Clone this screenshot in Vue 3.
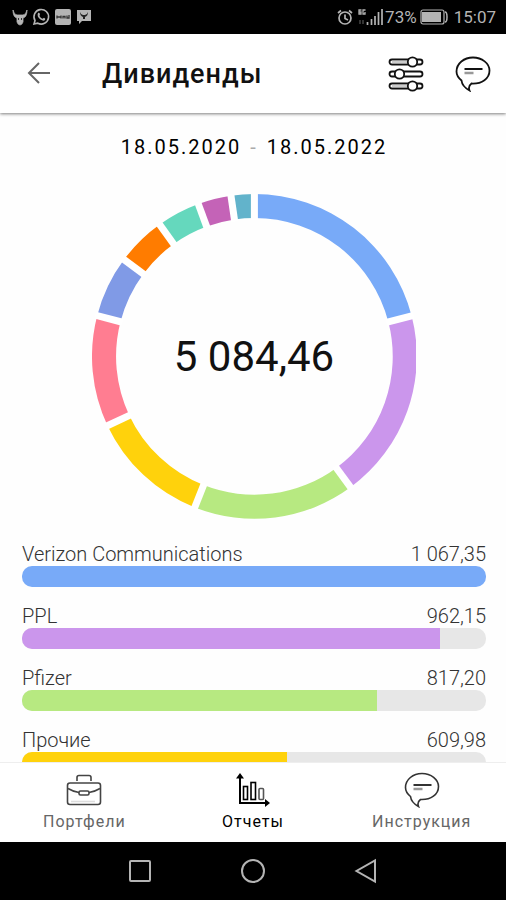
<script setup>
import { ref, computed } from 'vue';

const period = ref({ from: '18.05.2020', to: '18.05.2022' });
const activeTab = ref('reports');

const dividends = ref([
    { name: 'Verizon Communications', value: 1067.35, color: '#78aaf8' },
    { name: 'PPL', value: 962.15, color: '#cb96ec' },
    { name: 'Pfizer', value: 817.2, color: '#b7e981' },
    { name: 'Прочие', value: 609.98, color: '#ffd20c' },
]);

// smaller positions, shown on the chart only
const others = ref([
    { value: 561.5, color: '#ff7d91' },
    { value: 312.1, color: '#809ae6' },
    { value: 250, color: '#ff7c00' },
    { value: 218.9, color: '#65d8bd' },
    { value: 168.1, color: '#c463b7' },
    { value: 117.18, color: '#62b3cb' },
]);

const tabs = [
    { id: 'portfolios', label: 'Портфели' },
    { id: 'reports', label: 'Отчеты' },
    { id: 'help', label: 'Инструкция' },
];

const sum = (list) => list.reduce((acc, item) => acc + item.value, 0);
const total = computed(() => sum(dividends.value) + sum(others.value));
const max = computed(() => Math.max(...dividends.value.map((item) => item.value)));

const formatMoney = (value) => {
    const [whole, cents] = value.toFixed(2).split('.');
    return whole.replace(/\B(?=(\d{3})+$)/g, '\u00a0') + ',' + cents;
};

const point = (angle, radius) => {
    const rad = (angle * Math.PI) / 180;
    return `${162 + radius * Math.sin(rad)} ${162 - radius * Math.cos(rad)}`;
};

const segments = computed(() => {
    let angle = 0;
    return [...dividends.value, ...others.value].map((item) => {
        const start = angle;
        angle += (item.value / total.value) * 360;
        return {
            color: item.color,
            start,
            path: `M${point(start, 162)} A162 162 0 0 1 ${point(angle, 162)} L${point(angle, 138)} A138 138 0 0 0 ${point(start, 138)} Z`,
        };
    });
});
</script>

<template>
    <div class="screen">
        <div class="status">
            <div class="statusIcons">
                <svg width="16" height="18" viewBox="0 0 16 18">
                    <path d="M1 2 Q2 7 5 7 L11 7 Q14 7 15 2 Q15 9 11 10 L11 14 Q10 17 8 17 Q6 17 5 14 L5 10 Q1 9 1 2Z" fill="#b4b4b4" stroke="#b4b4b4" stroke-width="0.800" />
                    <path d="M6.500 10v2M9.500 10v2" stroke="#333" />
                </svg>
                <svg width="18" height="18" viewBox="0 0 18 18">
                    <path d="M2 16 L3 12.500 A7.300 7.300 0 1 1 5.800 15.200 Z" fill="none" stroke="#b4b4b4" stroke-width="1.600" />
                    <path d="M6 5 Q7 4 8 6 L7.500 8 Q8.500 10 10.500 10.700 L12 9.800 Q14 10.500 13 12 Q11.500 13.500 8.500 11.500 Q4.500 8.500 6 5Z" fill="#b4b4b4" />
                </svg>
                <svg width="18" height="18" viewBox="0 0 18 18">
                    <rect x="1" y="1" width="16" height="16" rx="2" fill="#b4b4b4" />
                    <path d="M3 7.500v3M3 9h4M7 7.500v3M9 10.500v-2h2v2M13 7.500v2.500h2v-3" fill="none" stroke="#333" stroke-width="1.300" />
                </svg>
                <svg width="16" height="18" viewBox="0 0 16 18">
                    <path d="M1 2h14v11H6l-3 3v-3H1Z" fill="#b4b4b4" />
                    <path d="M4 4q1 3 3 3h2q2 0 3-3q0 4-3 5v2H7V9Q4 8 4 4Z" fill="#222" />
                </svg>
            </div>
            <div class="statusRight">
                <svg width="16" height="17" viewBox="0 0 16 17">
                    <g fill="none" stroke="#b4b4b4" stroke-width="1.700">
                        <circle cx="8" cy="9" r="6" />
                        <path d="M8 5.500v4l3 1.500M1 4l3-2.500M12 1.500L15 4" />
                    </g>
                </svg>
                <svg class="signal" width="25" height="18" viewBox="0 0 25 18">
                    <path d="M3.500 2H1v4h2V4H1M7.500 2H5v4h2V4" fill="none" stroke="#b4b4b4" stroke-width="1.300" />
                    <path d="M2 12v4M5 12v4" stroke="#333" stroke-width="2" />
                    <path d="M9.500 14v3M13.500 11v6M17 8v9M20.500 4v13M24 1v16" stroke="#b4b4b4" stroke-width="1.700" />
                </svg>
                <span>73%</span>
                <svg class="battery" width="28" height="16" viewBox="0 0 28 16">
                    <rect x="1" y="1" width="23" height="14" rx="2" fill="none" stroke="#b4b4b4" stroke-width="1.200" />
                    <rect x="2" y="3" width="19" height="10" fill="#b4b4b4" />
                    <path d="M25 3q2 0 2 5T25 13" fill="none" stroke="#b4b4b4" stroke-width="1.500" />
                </svg>
                <span>15:07</span>
            </div>
        </div>

        <header class="header">
            <button class="iconButton" aria-label="Назад">
                <svg width="24" height="24" viewBox="0 0 24 24" fill="none" stroke="#666" stroke-width="2">
                    <path d="M23 11H2M12 1L2 11l10 10" />
                </svg>
            </button>
            <h1>Дивиденды</h1>
            <button class="iconButton" aria-label="Фильтр">
                <svg width="36" height="36" viewBox="0 0 36 36" fill="#fff" stroke="#111" stroke-width="1.800">
                    <rect x="1.500" y="3.500" width="33" height="5" rx="2.500" />
                    <rect x="1.500" y="15.500" width="33" height="5" rx="2.500" />
                    <rect x="1.500" y="27.500" width="33" height="5" rx="2.500" />
                    <path d="M4 6h16M4 30h16" stroke="#ccc" stroke-width="2.500" />
                    <circle cx="24.500" cy="6" r="4.700" />
                    <circle cx="11.500" cy="18" r="4.700" />
                    <circle cx="24.500" cy="30" r="4.700" />
                </svg>
            </button>
            <button class="iconButton" aria-label="Комментарии">
                <svg width="36" height="36" viewBox="0 0 36 36" fill="none" stroke="#111" stroke-width="1.800">
                    <path d="M6.500 24.500 C3.500 22 1.500 19 1.500 15.500 C1.500 7.500 9 1.500 18 1.500 C27 1.500 34.500 7.500 34.500 14.500 C34.500 22.500 27 28 16.500 27.500 C14.500 29 13.500 32 14.500 34.500 C10 32 7 29 6.500 24.500Z" />
                    <path d="M9.500 13H27.500" stroke-width="2" />
                    <path d="M9.500 17H18.500" stroke="#999" stroke-width="2.500" />
                </svg>
            </button>
        </header>

        <main class="content">
            <p class="period">{{ period.from }} <span>-</span> {{ period.to }}</p>

            <div class="chart">
                <svg viewBox="0 0 324 324">
                    <path v-for="segment in segments" :key="segment.start" :d="segment.path" :fill="segment.color" />
                    <line v-for="segment in segments" :key="segment.start" x1="162" y1="-2" x2="162" y2="26"
                        :transform="`rotate(${segment.start} 162 162)`" stroke="#fff" stroke-width="7" />
                </svg>
                <strong>{{ formatMoney(total) }}</strong>
            </div>

            <ul class="list">
                <li v-for="item in dividends" :key="item.name">
                    <div class="row">
                        <span>{{ item.name }}</span>
                        <span>{{ formatMoney(item.value) }}</span>
                    </div>
                    <div class="bar">
                        <div class="fill" :style="{ width: (item.value / max) * 100 + '%', background: item.color }"></div>
                    </div>
                </li>
            </ul>
        </main>

        <nav class="tabs">
            <button v-for="tab in tabs" :key="tab.id" :class="{ active: activeTab === tab.id }" @click="activeTab = tab.id">
                <svg v-if="tab.id === 'portfolios'" width="36" height="36" viewBox="0 0 36 36" fill="none" stroke="#444" stroke-width="1.600">
                    <path d="M11 9V5.500Q11 3.500 13 3.500H23Q25 3.500 25 5.500V9" />
                    <rect x="1.500" y="11" width="33" height="21.500" rx="2.500" />
                    <path d="M2 16.500Q8 20 13 20.500M23 20.500Q28 20 34 16.500" />
                    <rect x="13" y="19" width="10" height="4" rx="1.500" />
                    <path d="M5 29.500H29" stroke="#ddd" />
                </svg>
                <svg v-else-if="tab.id === 'reports'" width="36" height="36" viewBox="0 0 36 36" fill="none" stroke="#000" stroke-width="1.600">
                    <path d="M5 4V31H31" stroke-width="2" />
                    <path d="M1 6.500L5 1L9 6.500ZM30 27L35 31L30 35Z" fill="#000" stroke="none" />
                    <rect x="8.500" y="14.500" width="4" height="13" />
                    <rect x="16" y="10.500" width="4.500" height="17" />
                    <rect x="24" y="16.500" width="4.500" height="11" rx="1" stroke="#555" />
                </svg>
                <svg v-else width="36" height="36" viewBox="0 0 36 36" fill="none" stroke="#333" stroke-width="1.600">
                    <path d="M6.500 24.500 C3.500 22 1.500 19 1.500 15.500 C1.500 7.500 9 1.500 18 1.500 C27 1.500 34.500 7.500 34.500 14.500 C34.500 22.500 27 28 16.500 27.500 C14.500 29 13.500 32 14.500 34.500 C10 32 7 29 6.500 24.500Z" />
                    <path d="M9.500 13H27.500" stroke-width="2" />
                    <path d="M9.500 17H18.500" stroke="#999" stroke-width="2.500" />
                </svg>
                <span>{{ tab.label }}</span>
            </button>
        </nav>

        <div class="system">
            <button aria-label="Недавние">
                <svg width="24" height="24" viewBox="0 0 24 24"><rect x="2" y="2" width="20" height="20" rx="1" /></svg>
            </button>
            <button aria-label="Домой">
                <svg width="26" height="26" viewBox="0 0 26 26"><circle cx="13" cy="13" r="11" /></svg>
            </button>
            <button aria-label="Назад">
                <svg width="24" height="26" viewBox="0 0 24 26"><path d="M21 2.500V23.500L2.500 13Z" /></svg>
            </button>
        </div>
    </div>
</template>

<style>
body {
    background: #fff;
}
</style>

<style scoped>
.screen {
    display: flex;
    flex-direction: column;
    height: 100vh;
    font-family: Roboto, "Noto Sans", sans-serif;
    background: #fefefe;
}

button {
    border: none;
    background: none;
    padding: 0;
    font-family: inherit;
    cursor: pointer;
}

svg {
    display: block;
}

.status {
    flex: none;
    display: flex;
    justify-content: space-between;
    align-items: center;
    height: 34px;
    padding: 0 10px 0 12px;
    background: #000;
    color: #b4b4b4;
    font-size: 17px;
}

.statusIcons {
    display: flex;
    gap: 4px;
}

.statusRight {
    display: flex;
    align-items: center;
}

.signal {
    margin: 0 2px 0 5px;
}

.battery {
    margin: 0 6px 0 3px;
}

.header {
    flex: none;
    display: flex;
    align-items: center;
    height: 79px;
    padding: 0 15px 0 27px;
    background: #fff;
    box-shadow: 0 1px 3px rgba(0, 0, 0, 0.5);
    z-index: 1;
}

.header h1 {
    flex: 1;
    margin: 0 0 0 51px;
    font-size: 27px;
    font-weight: 500;
    letter-spacing: 1px;
    color: #111;
}

.header .iconButton + .iconButton {
    margin-left: 31px;
}

.content {
    flex: 1;
    min-height: 0;
    overflow: hidden;
    padding: 0 20px 0 22px;
}

.period {
    margin: 22px 0 0;
    text-align: center;
    font-size: 20px;
    line-height: 24px;
    letter-spacing: 2px;
    color: #000;
}

.period span {
    margin: 0 2px;
    color: #aaa;
}

.chart {
    display: grid;
    place-items: center;
    width: 70%;
    margin: 35px auto 0;
}

.chart svg,
.chart strong {
    grid-area: 1 / 1;
}

.chart svg {
    width: 100%;
}

.chart strong {
    font-size: 42px;
    font-weight: 400;
    color: #111;
}

.list {
    list-style: none;
    margin: 23px 0 0;
    padding: 0;
}

.list li {
    margin-bottom: 17px;
}

.row {
    display: flex;
    justify-content: space-between;
    font-size: 20px;
    font-weight: 300;
    line-height: 24px;
    color: #333;
}

.bar {
    height: 21px;
    border-radius: 10px;
    background: #e7e7e7;
    overflow: hidden;
}

.fill {
    height: 100%;
}

.tabs {
    flex: none;
    display: flex;
    height: 79px;
    background: #fff;
    border-top: 1px solid #eee;
}

.tabs button {
    flex: 1;
    display: flex;
    flex-direction: column;
    align-items: center;
    padding-top: 9px;
    font-size: 16px;
    line-height: 28px;
    letter-spacing: 1px;
    color: #666;
}

.tabs button.active {
    color: #000;
}

.system {
    flex: none;
    display: flex;
    justify-content: center;
    align-items: center;
    gap: 88px;
    height: 58px;
    background: #000;
}

.system svg {
    fill: none;
    stroke: #b4b4b4;
    stroke-width: 2;
}
</style>
